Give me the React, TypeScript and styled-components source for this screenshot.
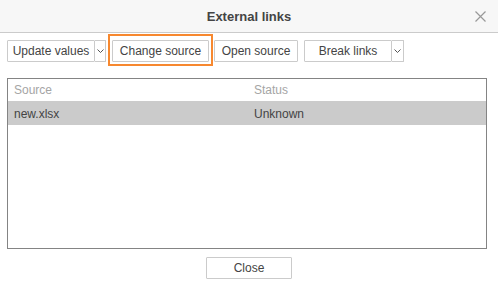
import styled, { createGlobalStyle } from "styled-components";

const GlobalStyle = createGlobalStyle`
  html, body {
    margin: 0;
    padding: 0;
    background: #ffffff;
  }
  * {
    box-sizing: border-box;
  }
`;

const Dialog = styled.div`
  width: 498px;
  height: 289px;
  background: #fff;
  font-family: "Liberation Sans", Arial, sans-serif;
  font-size: 12px;
  color: #444;
  display: flex;
  flex-direction: column;
`;

const Header = styled.div`
  height: 33px;
  background: #f7f7f7;
  border-bottom: 1px solid #cbcbcb;
  display: flex;
  align-items: center;
  justify-content: center;
  position: relative;

  h1 {
    margin: 0;
    font-size: 13px;
    font-weight: 700;
    color: #444;
  }
`;

const CloseX = styled.div`
  position: absolute;
  right: 12px;
  top: 11px;
  width: 11px;
  height: 11px;
`;

const Toolbar = styled.div`
  display: flex;
  padding: 7px 7px 0 7px;
  gap: 6px;
`;

const Group = styled.div<{ $pull?: number }>`
  display: flex;
  position: relative;
  margin-left: ${(p) => -(p.$pull || 0)}px;
`;

const Button = styled.div<{ $w: number }>`
  width: ${(p) => p.$w}px;
  height: 22px;
  border: 1px solid #cbcbcb;
  border-radius: 1px;
  background: #fff;
  display: flex;
  align-items: center;
  justify-content: center;
  font-size: 12px;
  color: #444;
`;

const Caret = styled.div<{ $w: number }>`
  width: ${(p) => p.$w}px;
  height: 22px;
  border: 1px solid #cbcbcb;
  border-left: none;
  border-radius: 0 1px 1px 0;
  display: flex;
  align-items: center;
  justify-content: center;
`;

const Highlight = styled.div`
  position: absolute;
  left: -4px;
  right: -4px;
  top: -6px;
  bottom: -4px;
  border: 2px solid #f7882f;
  pointer-events: none;
`;

const Table = styled.div`
  margin: 16px 11px 0 7px;
  height: 171px;
  border: 1px solid #848484;
  display: flex;
  flex-direction: column;
`;

const Row = styled.div<{ $head?: boolean; $selected?: boolean }>`
  display: grid;
  grid-template-columns: 240px 1fr;
  height: 23px;
  align-items: center;
  padding-left: 6px;
  border-bottom: ${(p) => (p.$head ? "1px solid #cbcbcb" : "none")};
  background: ${(p) => (p.$selected ? "#cbcbcb" : "transparent")};
  color: ${(p) => (p.$head ? "#a5a5a5" : "#444")};
  font-size: 12px;
`;

const Footer = styled.div`
  display: flex;
  justify-content: center;
  padding-top: 8px;
`;

const Chevron = () => (
  <svg width="7" height="4" viewBox="0 0 7 4">
    <path d="M0.5 0.5 L3.5 3.5 L6.5 0.5" fill="none" stroke="#555" strokeWidth="1" />
  </svg>
);

export default function App() {
  return (
    <>
      <GlobalStyle />
      <Dialog>
        <Header>
          <h1>External links</h1>
          <CloseX>
            <svg width="11" height="11" viewBox="0 0 11 11">
              <path d="M0.5 0.5 L10.5 10.5 M10.5 0.5 L0.5 10.5" stroke="#999" strokeWidth="1.2" />
            </svg>
          </CloseX>
        </Header>

        {/* Toolbar */}

        <Toolbar>
          <Group>
            <Button $w={88}>Update values</Button>
            <Caret $w={11}>
              <Chevron />
            </Caret>
          </Group>
          <Group>
            <Button $w={97}>Change source</Button>
            <Highlight />
          </Group>
          <Group $pull={1}>
            <Button $w={84}>Open source</Button>
          </Group>
          <Group>
            <Button $w={88}>Break links</Button>
            <Caret $w={12}>
              <Chevron />
            </Caret>
          </Group>
        </Toolbar>

        {/* Links list */}

        <Table>
          <Row $head>
            <span>Source</span>
            <span>Status</span>
          </Row>
          <Row $selected>
            <span>new.xlsx</span>
            <span>Unknown</span>
          </Row>
        </Table>

        <Footer>
          <Button $w={86}>Close</Button>
        </Footer>
      </Dialog>
    </>
  );
}
